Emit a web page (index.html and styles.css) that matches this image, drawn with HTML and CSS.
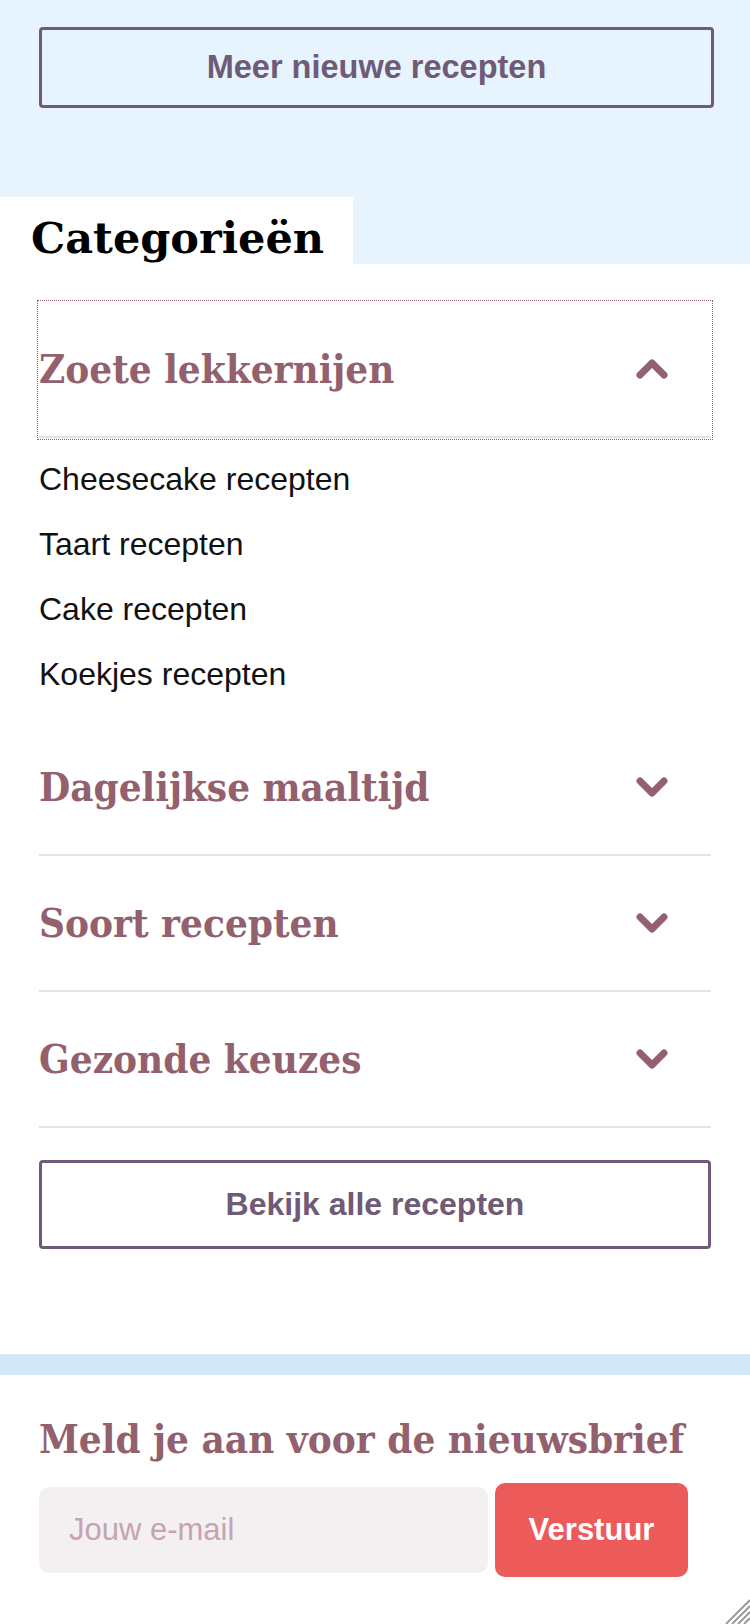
FILE: index.html
```html
<!DOCTYPE html>
<html lang="nl">
<head>
<meta charset="utf-8">
<title>Categorieën</title>
<link rel="stylesheet" href="styles.css">
</head>
<body>
<div class="page">
  <section class="hero">
    <div class="hero-inner">
      <a class="btn-outline btn-more" href="#">Meer nieuwe recepten</a>
    </div>
    <div class="tab-row">
      <h2 class="tab-title">Categorieën</h2>
      <div class="tab-fill"></div>
    </div>
  </section>

  <section class="categories">
    <div class="acc-item open">
      <button class="acc-head focused">
        <span class="acc-title">Zoete lekkernijen</span>
        <svg class="chev" viewBox="0 0 32 20" width="32" height="20"><polyline points="4,16 16,4 28,16" /></svg>
      </button>
      <ul class="acc-list">
        <li><a href="#">Cheesecake recepten</a></li>
        <li><a href="#">Taart recepten</a></li>
        <li><a href="#">Cake recepten</a></li>
        <li><a href="#">Koekjes recepten</a></li>
      </ul>
    </div>
    <div class="acc-item">
      <button class="acc-head">
        <span class="acc-title">Dagelijkse maaltijd</span>
        <svg class="chev down" viewBox="0 0 32 20" width="32" height="20"><polyline points="4,4 16,16 28,4" /></svg>
      </button>
    </div>
    <div class="acc-item">
      <button class="acc-head">
        <span class="acc-title">Soort recepten</span>
        <svg class="chev down" viewBox="0 0 32 20" width="32" height="20"><polyline points="4,4 16,16 28,4" /></svg>
      </button>
    </div>
    <div class="acc-item">
      <button class="acc-head">
        <span class="acc-title">Gezonde keuzes</span>
        <svg class="chev down" viewBox="0 0 32 20" width="32" height="20"><polyline points="4,4 16,16 28,4" /></svg>
      </button>
    </div>
    <a class="btn-outline btn-all" href="#">Bekijk alle recepten</a>
  </section>

  <div class="stripe"></div>

  <section class="newsletter">
    <h3 class="nl-title">Meld je aan voor de nieuwsbrief</h3>
    <form class="nl-form">
      <input class="nl-input" type="email" placeholder="Jouw e-mail">
      <button class="nl-btn" type="button">Verstuur</button>
    </form>
  </section>

  <svg class="grip" viewBox="0 0 26 26" width="26" height="26">
    <line x1="26" y1="2" x2="2" y2="26" />
    <line x1="26" y1="8" x2="8" y2="26" />
    <line x1="26" y1="14" x2="14" y2="26" />
    <line x1="26" y1="20" x2="20" y2="26" />
  </svg>
</div>
</body>
</html>
```

FILE: styles.css
```css
* { box-sizing: border-box; }

html, body {
  margin: 0;
  padding: 0;
  background: #ffffff;
}

body {
  font-family: "Liberation Sans", Arial, sans-serif;
  color: #111111;
}

.page {
  position: relative;
  width: 750px;
  min-height: 1624px;
  overflow: hidden;
}

.hero {
  background: #e7f4fd;
}

.hero-inner {
  padding: 27px 36px 89px 39px;
}

.btn-outline {
  display: flex;
  align-items: center;
  justify-content: center;
  border: 3px solid #6f5b78;
  border-radius: 4px;
  color: #6f5b78;
  font-family: "Liberation Sans", Arial, sans-serif;
  font-weight: bold;
  font-size: 32px;
  text-decoration: none;
}

.btn-more {
  height: 81px;
  font-size: 32.5px;
}

.tab-row {
  display: flex;
  height: 67px;
}

.tab-title {
  margin: 0;
  width: 353px;
  background: #ffffff;
  padding: 13px 0 0 31px;
  font-family: "DejaVu Serif", serif;
  font-weight: bold;
  font-size: 43px;
  line-height: 56px;
  color: #000000;
}

.tab-fill {
  flex: 1;
}

.categories {
  padding: 38px 39px 0 39px;
}

.acc-head {
  display: flex;
  align-items: center;
  justify-content: space-between;
  width: 100%;
  height: 136px;
  padding: 0 43px 0 0;
  margin: 0;
  background: transparent;
  border: 0;
  border-bottom: 2px solid #e4e4e4;
  cursor: pointer;
  text-align: left;
}

.acc-head.focused {
  outline: 1px dotted #93606d;
  outline-offset: 1px;
}

.acc-title {
  font-family: "DejaVu Serif Condensed", "DejaVu Serif", serif;
  font-weight: bold;
  font-size: 40px;
  color: #93606d;
  line-height: 1;
}

.chev {
  display: block;
  fill: none;
  stroke: #93606d;
  stroke-width: 7;
  stroke-linecap: round;
  stroke-linejoin: round;
}

.acc-list {
  list-style: none;
  margin: 0;
  padding: 9px 0 13px 0;
}

.acc-list li {
  height: 65px;
  line-height: 65px;
}

.acc-list a {
  color: #111111;
  text-decoration: none;
  font-size: 32px;
}

.btn-all {
  margin-top: 32px;
  height: 89px;
}

.stripe {
  margin-top: 105px;
  height: 21px;
  background: #d3e7f7;
}

.newsletter {
  padding: 40px 39px 0 39px;
}

.nl-title {
  margin: 0;
  font-family: "DejaVu Serif Condensed", "DejaVu Serif", serif;
  font-weight: bold;
  font-size: 40px;
  line-height: 48px;
  color: #93606d;
  white-space: nowrap;
}

.nl-form {
  display: flex;
  align-items: center;
  gap: 7px;
  margin-top: 20px;
  width: 649px;
}

.nl-input {
  width: 449px;
  height: 86px;
  border: 0;
  border-radius: 10px;
  background: #f4eff1;
  padding: 0 30px;
  font-family: "Liberation Sans", Arial, sans-serif;
  font-size: 31px;
  color: #333333;
}

.nl-input::placeholder {
  color: #c5a4af;
}

.nl-btn {
  width: 193px;
  height: 94px;
  border: 0;
  border-radius: 10px;
  background: #ec5a5a;
  color: #ffffff;
  font-family: "Liberation Sans", Arial, sans-serif;
  font-weight: bold;
  font-size: 31px;
}

.grip {
  position: absolute;
  right: 0;
  bottom: 0;
  stroke: #9a9a9a;
  stroke-width: 2;
}
```
